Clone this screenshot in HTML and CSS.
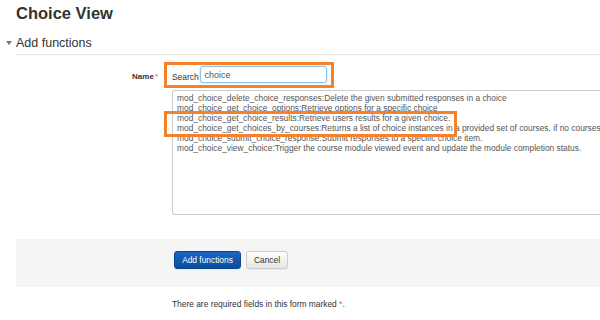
FILE: index.html
```html
<!DOCTYPE html>
<html lang="en">
<head>
    <meta charset="UTF-8">
    <title>Choice View</title>
    <link rel="stylesheet" href="styles.css">
</head>
<body>
    <div class="page">
        <h1 class="page-title">Choice View</h1>

        <div class="fieldset">
            <div class="legend">
                <span class="toggle"></span>
                <span>Add functions</span>
            </div>

            <div class="fieldset-body">
                <div class="form-row">
                    <div class="form-label">Name<span class="req">*</span></div>
                    <div class="form-field">
                        <div class="search-box">
                            <span class="search-label">Search</span>
                            <div class="search-input">choice</div>
                        </div>
                        <div class="option-list">
                            <div>mod_choice_delete_choice_responses:Delete the given submitted responses in a choice</div>
                            <div>mod_choice_get_choice_options:Retrieve options for a specific choice</div>
                            <div>mod_choice_get_choice_results:Retrieve users results for a given choice.</div>
                            <div>mod_choice_get_choices_by_courses:Returns a list of choice instances in a provided set of courses, if no courses</div>
                            <div>mod_choice_submit_choice_response:Submit responses to a specific choice item.</div>
                            <div>mod_choice_view_choice:Trigger the course module viewed event and update the module completion status.</div>
                        </div>
                        <!-- annotation box drawn over the list -->
                        <div class="highlight"></div>
                    </div>
                </div>
            </div>
        </div>

        <div class="form-actions">
            <button class="btn btn-primary">Add functions</button>
            <button class="btn">Cancel</button>
        </div>

        <p class="note">There are required fields in this form marked <span class="req">*</span>.</p>
    </div>
</body>
</html>
```

FILE: styles.css
```css
* {
    margin: 0;
    padding: 0;
    box-sizing: border-box;
}

body {
    font-family: 'Liberation Sans', Arial, sans-serif;
    font-size: 8.4px;
    color: #333;
    background: #fff;
    overflow: hidden;
    width: 600px;
    height: 320px;
}

.page {
    padding-left: 16px;
    overflow: hidden;
}

.page-title {
    margin-top: 2px;
    font-size: 16.5px;
    line-height: 22px;
    font-weight: bold;
    color: #333;
}

.legend {
    display: flex;
    align-items: center;
    margin-top: 11px;
    margin-left: -10px;
    height: 16px;
    font-size: 12.5px;
    color: #333;
}

.toggle {
    width: 0;
    height: 0;
    border-left: 3px solid transparent;
    border-right: 3px solid transparent;
    border-top: 4px solid #777;
    margin-right: 4px;
}

.fieldset-body {
    margin-top: 3px;
    border-top: 1px solid #e5e5e5;
}

.form-row {
    display: grid;
    grid-template-columns: 148px 1fr;
    padding-top: 7px;
}

.form-label {
    text-align: right;
    font-weight: bold;
    font-size: 8px;
    padding-top: 10px;
    padding-right: 6px;
}

.req {
    color: #d9534f;
    font-weight: normal;
}

.form-label .req {
    margin-left: 1px;
}

.form-field {
    position: relative;
}

.search-box {
    display: inline-flex;
    align-items: flex-end;
    width: 170px;
    height: 26px;
    border: 3px solid #f5822a;
    padding: 0 4px 1px 5px;
}

.search-label {
    padding-bottom: 2px;
    margin-right: 1px;
}

.search-input {
    width: 128px;
    height: 17px;
    border: 1px solid #8fc1ea;
    border-radius: 3px;
    box-shadow: 0 0 2px rgba(102, 175, 233, 0.6);
    padding: 2px 4px;
    font-size: 9px;
    line-height: 12px;
    color: #555;
    margin-bottom: 1px;
}

.option-list {
    margin-top: 2px;
    margin-left: 8px;
    height: 125px;
    border: 1px solid #ccc;
    border-right: none;
    border-radius: 3px 0 0 3px;
    padding: 2px 4px;
    line-height: 10px;
    color: #555;
    white-space: nowrap;
    overflow: hidden;
}

.highlight {
    position: absolute;
    top: 49px;
    left: 0;
    width: 293px;
    height: 26px;
    border: 3px solid #f5822a;
}

.form-actions {
    margin-top: 24px;
    height: 48px;
    background: #f5f5f5;
    padding: 12px 0 0 158px;
    display: flex;
    gap: 5px;
    align-items: flex-start;
}

.btn {
    height: 18px;
    padding: 0 7px;
    font-family: inherit;
    font-size: 8.4px;
    color: #333;
    background: linear-gradient(#fff, #e6e6e6);
    border: 1px solid #ccc;
    border-radius: 3px;
    box-shadow: 0 1px 1px rgba(0, 0, 0, 0.05);
}

.btn-primary {
    width: 67px;
    color: #fff;
    background: linear-gradient(#1768c4, #0b4d9c);
    border-color: #0a4791;
}

.note {
    margin-top: 12px;
    padding-left: 156px;
    line-height: 10px;
}
```
